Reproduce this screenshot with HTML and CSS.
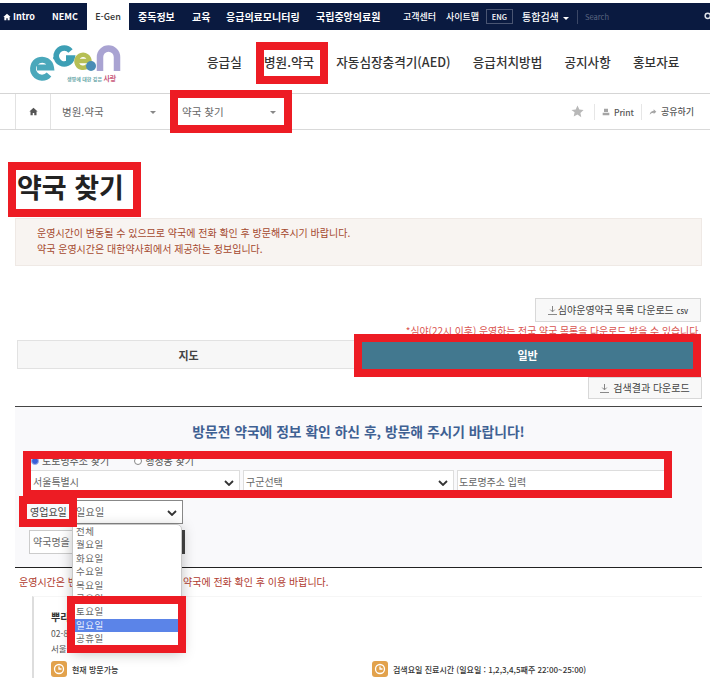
FILE: index.html
```html
<!DOCTYPE html>
<html lang="ko">
<head>
<meta charset="utf-8">
<title>약국 찾기</title>
<link rel="stylesheet" href="styles.css">
</head>
<body>
<div class="page">
  <nav class="topbar">
    <a class="t-intro"><svg class="ico-home" viewBox="0 0 12 12"><path d="M6 1 0.5 6H2v5h3V8h2v3h3V6h1.500z"/></svg>Intro</a>
    <a class="t-nemc">NEMC</a>
    <a class="t-egen">E-Gen</a>
    <a class="t-a">중독정보</a>
    <a class="t-b">교육</a>
    <a class="t-c">응급의료모니터링</a>
    <a class="t-d">국립중앙의료원</a>
    <a class="t-e">고객센터</a>
    <a class="t-f">사이트맵</a>
    <a class="t-eng">ENG</a>
    <a class="t-g">통합검색<span class="caret"></span></a>
    <span class="t-search">Search</span>
    <svg class="ico-search" viewBox="0 0 12 12"><circle cx="5" cy="5" r="3.500"/><path d="M8 8l3 3"/></svg>
  </nav>

  <header class="header">
    <svg class="logo" viewBox="0 0 100 50">
      <path d="M24 36.500a9 9 0 1 1 2-7H12" fill="none" stroke="#4aa8bb" stroke-width="6"/>
      <circle cx="29.500" cy="20" r="1.500" fill="#4aa8bb"/>
      <path d="M45.500 13a8 8 0 1 0 1.500 7h-6" fill="none" stroke="#3d9fb5" stroke-width="5.500"/>
      <path d="M53 23h11.500a6.500 6.500 0 1 0-2 5" fill="none" stroke="#b6bf55" stroke-width="4.500"/>
      <circle cx="66" cy="28" r="5" fill="#4a8db5"/>
      <path d="M75 33V19a8.500 8.500 0 0 1 17 0v14" fill="none" stroke="#a9a3d2" stroke-width="6.500"/>
      <text x="42" y="43" class="logo-t">생명에 대한 깊은 <tspan class="logo-s">사랑</tspan></text>
    </svg>
    <ul class="mainnav">
      <li>응급실</li>
      <li>병원.약국</li>
      <li>자동심장충격기(AED)</li>
      <li>응급처치방법</li>
      <li>공지사항</li>
      <li>홍보자료</li>
    </ul>
  </header>

  <div class="crumbs">
    <span class="c-home"><svg viewBox="0 0 12 12"><path d="M6 1 0.5 6H2v5h3V8h2v3h3V6h1.500z"/></svg></span>
    <span class="c-sel c-sel1">병원.약국<i class="tri"></i></span>
    <span class="c-sel c-sel2">약국 찾기<i class="tri"></i></span>
    <span class="c-tools">
      <svg class="ico-star" viewBox="0 0 12 12"><path d="M6 .5l1.700 3.600 3.900.5-2.900 2.700.8 3.900L6 8.800l-3.500 1.900.8-3.900L.4 4.600l3.900-.5z"/></svg>
      <span class="c-tool c-print"><svg viewBox="0 0 12 12"><path d="M3 1h6v5H3zM1 7h10v4H1z"/></svg>Print</span>
      <span class="c-tool c-share"><svg viewBox="0 0 12 12"><path d="M7 2l4 3.500L7 9V7Q3 7 1 10q.5-5 6-6z"/></svg>공유하기</span>
    </span>
  </div>

  <main class="content">
    <h1 class="title">약국 찾기</h1>
    <div class="alert">
      <p>운영시간이 변동될 수 있으므로 약국에 전화 확인 후 방문해주시기 바랍니다.</p>
      <p>약국 운영시간은 대한약사회에서 제공하는 정보입니다.</p>
    </div>

    <div class="dl-row">
      <a class="dl dl-1"><svg class="ico-dl" viewBox="0 0 10 10"><path d="M5 0v6M2.500 4 5 6.500 7.500 4M0 9.500h10"/></svg>심야운영약국 목록 다운로드 <small>csv</small></a>
    </div>
    <p class="night">*심야(22시 이후) 운영하는 전국 약국 목록을 다운로드 받을 수 있습니다.</p>

    <div class="tabs">
      <span class="tab tab-map">지도</span>
      <span class="tab tab-gen">일반</span>
    </div>
    <div class="dl-row dl-row2">
      <a class="dl dl-2"><svg class="ico-dl" viewBox="0 0 10 10"><path d="M5 0v6M2.500 4 5 6.500 7.500 4M0 9.500h10"/></svg>검색결과 다운로드</a>
    </div>

    <section class="panel">
      <h2 class="panel-title">방문전 약국에 정보 확인 하신 후, 방문해 주시기 바랍니다!</h2>
      <div class="radios">
        <label><span class="radio on"></span>도로명주소 찾기</label>
        <label><span class="radio"></span>행정동 찾기</label>
      </div>
      <div class="addr">
        <span class="sel sel-city">서울특별시<svg class="chev" viewBox="0 0 10 6"><path d="M1 1l4 4 4-4"/></svg></span>
        <span class="sel sel-gu">구군선택<svg class="chev" viewBox="0 0 10 6"><path d="M1 1l4 4 4-4"/></svg></span>
        <span class="inp">도로명주소 입력</span>
      </div>
      <div class="dayrow">
        <span class="daylabel">영업요일</span>
        <span class="sel sel-day">일요일<svg class="chev" viewBox="0 0 10 6"><path d="M1 1l4 4 4-4"/></svg></span>
      </div>
      <div class="namerow">
        <span class="inp inp-name">약국명을 입력</span>
        <span class="btn-search"></span>
      </div>
    </section>

    <p class="notice">운영시간은 변동될 수 있으므로 방문 전 약국에 전화 확인 후 이용 바랍니다.</p>

    <section class="result">
      <h3 class="r-name">뿌리약국</h3>
      <p class="r-line">02-8</p>
      <p class="r-line">서울특별시 (동)</p>
      <div class="r-hours">
        <span class="r-hour"><svg class="ico-clock" viewBox="0 0 16 16"><rect width="16" height="16" rx="3"/><circle cx="8" cy="8" r="4.500"/><path d="M8 5.500V8h2.500"/></svg>현재 방문가능</span>
        <span class="r-hour r-hour2"><svg class="ico-clock" viewBox="0 0 16 16"><rect width="16" height="16" rx="3"/><circle cx="8" cy="8" r="4.500"/><path d="M8 5.500V8h2.500"/></svg>검색요일 진료시간 (일요일 : 1,2,3,4,5째주 22:00~25:00)</span>
      </div>
    </section>
  </main>

  <ul class="daylist">
    <li>전체</li><li>월요일</li><li>화요일</li><li>수요일</li><li>목요일</li><li>금요일</li><li>토요일</li><li class="picked">일요일</li><li>공휴일</li>
  </ul>

  <span class="mark m-nav"></span>
  <span class="mark m-sel"></span>
  <span class="mark m-title"></span>
  <span class="mark m-tab"></span>
  <span class="mark m-addr"></span>
  <span class="mark m-day"></span>
  <span class="mark m-list"></span>
</div>
</body>
</html>
```

FILE: styles.css
```css
* { box-sizing: border-box; }
html, body { margin: 0; padding: 0; background: #fff; }
body { font-family: "Noto Sans CJK KR", "Noto Sans", sans-serif; color: #333; overflow: hidden; }
.page { position: relative; width: 710px; height: 678px; overflow: hidden; }
p, h1, h2, h3, ul { margin: 0; padding: 0; list-style: none; font-weight: normal; }

/* top bar */
.topbar { display: flex; align-items: center; height: 27px; margin-top: 3px; background: #0a1a40; color: #fff; font-size: 10px; font-weight: 500; white-space: nowrap; }
.topbar a { display: block; flex: none; }
.ico-home { width: 8px; height: 8px; fill: currentColor; margin-right: 2px; vertical-align: -1px; }
.t-intro { margin-left: 3px; width: 35px; font-size: 9px; font-weight: 700; }
.t-nemc { margin-left: 14px; width: 26px; font-size: 9px; font-weight: 700; }
.t-egen { margin-left: 9px; width: 42px; height: 27px; line-height: 27px; background: #fff; color: #333; text-align: center; font-size: 9px; }
.topbar .t-a, .topbar .t-b, .topbar .t-c, .topbar .t-d { font-weight: 700; }
.t-a { margin-left: 9px; width: 37px; }
.t-b { margin-left: 17px; width: 17px; }
.t-c { margin-left: 17px; width: 73px; }
.t-d { margin-left: 17px; width: 63px; }
.t-e { margin-left: 24px; width: 33px; font-size: 9px; }
.t-f { margin-left: 10px; width: 32px; font-size: 9px; }
.t-eng { margin-left: 8px; width: 27px; height: 15px; line-height: 13px; border: 1px solid #4a5572; text-align: center; font-size: 7.500px; }
.t-g { margin-left: 9px; width: 48px; }
.caret { display: inline-block; margin-left: 4px; vertical-align: 1px; border: 3px solid transparent; border-top-color: #fff; border-bottom: 0; }
.t-search { margin-left: 7px; padding-left: 7px; height: 14px; line-height: 14px; border-left: 1px solid #3b4766; color: #5d6780; font-weight: 400; font-size: 7.500px; }
.ico-search { width: 9px; height: 9px; margin-left: auto; margin-right: -3px; fill: none; stroke: #dfe3ea; stroke-width: 2; }

/* header */
.header { display: flex; align-items: center; height: 64px; border-bottom: 1px solid #d5d5d5; }
.logo { width: 100px; height: 50px; margin-left: 25px; margin-top: 2px; flex: none; }
.logo-t { font-size: 5px; fill: #6aa7a9; font-weight: 700; }
.logo-s { fill: #c8577a; font-size: 7px; }
.mainnav { display: flex; margin-left: 82px; font-size: 12.600px; font-weight: 500; color: #333; white-space: nowrap; }
.mainnav li { margin-right: 22.200px; }

/* breadcrumb */
.crumbs { display: flex; align-items: center; height: 36px; background: #fff; border-bottom: 1px solid #d9d9d9; font-size: 10.500px; color: #666; }
.c-home { width: 36px; height: 35px; margin-left: 15px; display: flex; align-items: center; justify-content: center; border-left: 1px solid #e2e2e2; border-right: 1px solid #e2e2e2; }
.c-home svg { width: 9px; height: 9px; fill: #555; }
.c-sel { position: relative; display: block; height: 35px; line-height: 35px; flex: none; }
.c-sel1 { width: 118px; padding-left: 11px; }
.c-sel2 { width: 118px; padding-left: 13px; }
.tri { position: absolute; top: 17px; border: 3px solid transparent; border-top-color: #888; border-bottom: 0; }
.c-sel1 .tri { right: 13px; }
.c-sel2 .tri { right: 11px; }
.c-tools { display: flex; align-items: center; margin-left: auto; margin-right: 16px; font-size: 8.500px; }
.ico-star { width: 13px; height: 13px; fill: #b8b8b8; margin-right: 10px; }
.c-tool { display: flex; align-items: center; height: 16px; padding-left: 7px; border-left: 1px solid #e6e6e6; color: #555; font-weight: 500; }
.c-tool svg { width: 8px; height: 8px; fill: #a5a5a5; margin-right: 4px; }
.c-print { width: 47px; }
.c-share { font-size: 9px; }

/* content */
.content { display: flow-root; padding: 0 8px 0 15px; }
.title { margin-top: 40px; margin-left: 2px; height: 34px; line-height: 34px; font-size: 27px; font-weight: 700; color: #222; }
.alert { margin-top: 14px; height: 48px; padding: 6px 21px; background: #f8f4f1; border: 1px solid #efe9e5; font-size: 10px; line-height: 16px; color: #a5482e; }
.dl-row { display: flex; justify-content: flex-end; margin-top: 32px; height: 24px; }
.dl { display: block; height: 24px; line-height: 22px; border: 1px solid #d8d8d8; background: #f8f8f8; font-size: 10px; color: #444; text-align: center; white-space: nowrap; }
.dl small { font-size: 7.500px; font-weight: 500; }
.dl-1 { width: 166px; margin-right: 1px; }
.ico-dl { width: 9px; height: 9px; fill: none; stroke: #777; margin-right: 1px; vertical-align: -1px; }
.night { margin-top: 2px; height: 14px; line-height: 14px; text-align: right; font-size: 9.900px; color: #d9534f; white-space: nowrap; margin-right: 1px; }
.tabs { display: flex; height: 29px; margin-top: 2px; }
.tab { display: flex; align-items: center; justify-content: center; font-size: 11px; font-weight: 700; }
.tab-map { width: 343px; margin-left: 2px; background: #f7f7f7; border: 1px solid #e2e2e2; color: #444; }
.tab-gen { width: 331px; margin-left: 2px; background: #42788f; color: #fff; }
.dl-row2 { margin-top: 8px; height: 22px; }
.dl-2 { width: 114px; height: 22px; line-height: 20px; }
.dl-2 .ico-dl { margin-right: 4px; }
.panel { margin-top: 7px; height: 162px; border-top: 1px solid #444; border-bottom: 1px solid #222; background: #f9f9fb; position: relative; }
.panel-title { margin-top: 15px; height: 18px; line-height: 18px; text-align: center; font-size: 13.800px; font-weight: 700; color: #3f6193; }
.radios { display: flex; margin-top: 15px; margin-left: 16px; height: 12px; line-height: 12px; font-size: 10px; color: #555; }
.radios label { display: flex; align-items: center; margin-right: 25px; }
.radio { width: 8px; height: 8px; margin-right: 3px; border: 1px solid #888; border-radius: 50%; background: #fff; }
.radio.on { background: #3a5fd8; border-color: #9fb0e8; }
.addr { display: flex; gap: 3px; margin-top: 3px; margin-left: 15px; height: 24px; }
.sel { position: relative; display: block; background: #fff; border: 1px solid #ddd; font-size: 10px; line-height: 22px; padding-left: 2px; color: #666; }
.sel-city { width: 210px; }
.sel-gu { width: 211px; }
.inp { display: block; background: #fff; border: 1px solid #ddd; font-size: 10px; line-height: 22px; padding-left: 2px; color: #666; white-space: nowrap; overflow: hidden; }
.addr .inp { width: 212px; padding-left: 1px; }
.chev { position: absolute; top: 9px; right: 5px; width: 10px; height: 6px; fill: none; stroke: #333; stroke-width: 1.800; }
.dayrow { display: flex; margin-top: 6px; margin-left: 8px; height: 24px; }
.daylabel { width: 48px; padding-left: 7px; font-size: 10px; line-height: 24px; color: #444; white-space: nowrap; }
.sel-day { width: 110px; margin-left: 2px; height: 24px; border-color: #888; letter-spacing: .3px; }
.namerow { display: flex; margin-top: 6px; margin-left: 14px; height: 24px; }
.inp-name { width: 149px; height: 24px; border-color: #ccc; padding-left: 3px; }
.btn-search { width: 7px; height: 24px; background: #444; }
.notice { margin-top: 7px; height: 14px; line-height: 14px; margin-left: 4px; font-size: 10px; color: #b03a2e; white-space: nowrap; }
.result { margin-top: 7px; margin-left: 17px; padding-left: 17px; border-top: 1px solid #f6f6f6; border-left: 2px solid #ddd; height: 83px; position: relative; margin-right: 0; }
.r-name { padding-top: 12px; height: 29px; line-height: 16px; font-size: 10px; font-weight: 700; color: #333; }
.r-line { height: 15px; line-height: 15px; font-size: 8.500px; color: #555; white-space: nowrap; }
.r-hours { display: flex; margin-top: 5px; margin-left: 0; }
.r-hour { display: flex; align-items: flex-start; width: 321px; height: 17px; line-height: 17px; font-size: 8px; color: #333; white-space: nowrap; font-weight: 500; }
.ico-clock { width: 16px; height: 16px; margin-right: 5px; flex: none; }
.ico-clock rect { fill: #e2a24c; }
.ico-clock circle, .ico-clock path { fill: none; stroke: #fff; stroke-width: 1.300; }

/* native-looking open select, floats over the form */
.daylist { position: absolute; left: 72px; top: 524px; width: 110px; height: 126px; padding-left: 3px; background: #fff; border: 1px solid #c8c8c8; border-radius: 0 5px 0 0; box-shadow: 0 3px 14px rgba(0,0,0,.25); font-size: 9.500px; color: #666; letter-spacing: .5px; }
.daylist li { height: 13.400px; line-height: 13.400px; }
.daylist .picked { margin-left: -3px; padding-left: 3px; background: #5b84e8; color: #e8eefc; }

/* red annotation frames */
.mark { position: absolute; border: 8px solid #ed1c24; }
.m-nav { left: 256px; top: 42px; width: 72px; height: 42px; }
.m-sel { left: 170px; top: 90px; width: 122px; height: 43px; }
.m-title { left: 8px; top: 162px; width: 133px; height: 55px; }
.m-tab { left: 354px; top: 334px; width: 347px; height: 43px; }
.m-addr { left: 23px; top: 451px; width: 649px; height: 47px; }
.m-day { left: 19px; top: 496px; width: 58px; height: 31px; }
.m-list { left: 67px; top: 596px; width: 119px; height: 57px; }
```
